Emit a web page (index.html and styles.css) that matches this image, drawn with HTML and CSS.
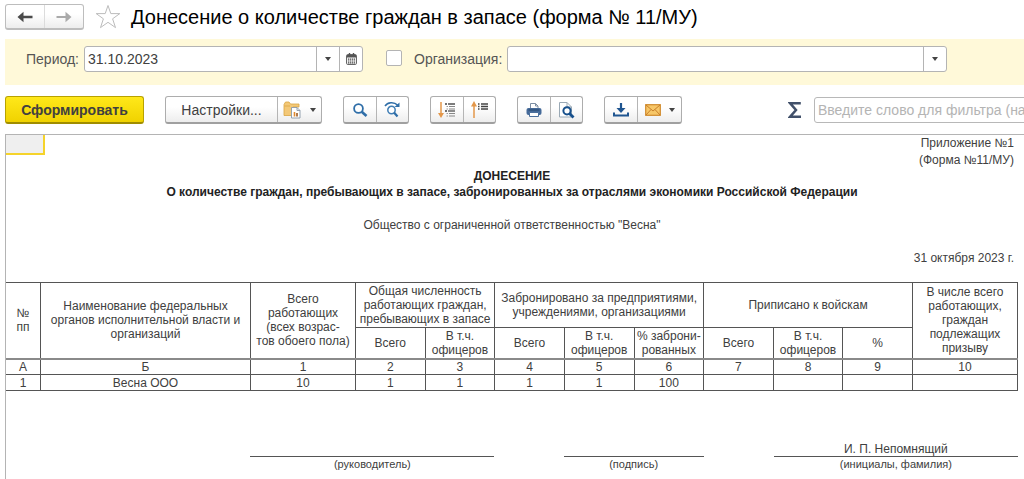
FILE: index.html
```html
<!DOCTYPE html>
<html lang="ru">
<head>
<meta charset="utf-8">
<title>Донесение о количестве граждан в запасе (форма № 11/МУ)</title>
<link rel="stylesheet" href="styles.css">
</head>
<body>
<header class="titlebar">
  <div class="group nav">
    <button class="btn" type="button" aria-label="Назад"><svg width="16" height="12" viewBox="0 0 16 12"><path d="M.5 6 6.500 .8V4.800H15.500V7.200H6.500V11.200Z" fill="#4a4a4a"/></svg></button>
    <button class="btn" type="button" aria-label="Вперед"><svg width="16" height="12" viewBox="0 0 16 12"><path d="M15.500 6 9.500 .8V5H.5V7H9.500V11.200Z" fill="#aaa"/></svg></button>
  </div>
  <button class="star" type="button" aria-label="Избранное"><svg width="26" height="26" viewBox="0 0 26 26"><path d="M13 1.500 15.800 9.600H24.800L17.600 14.800 20.500 23.600 13 18.300 5.500 23.600 8.400 14.800 1.200 9.600H10.200Z" fill="#fff" stroke="#bcbcbc"/></svg></button>
  <h1 class="title">Донесение о количестве граждан в запасе (форма № 11/МУ)</h1>
</header>

<form class="filters">
  <label class="label" for="period">Период:</label>
  <div class="field period">
    <input class="text" id="period" type="text" value="31.10.2023">
    <button class="drop" type="button" aria-label="Выбрать период"><svg width="6" height="4" viewBox="0 0 6 4"><path d="M0 0H6L3 4Z" fill="#444"/></svg></button>
    <button class="drop" type="button" aria-label="Календарь"><svg width="11" height="12" viewBox="0 0 11 12"><rect x=".6" y="1.600" width="9.800" height="9.800" rx="1" fill="#fff" stroke="#555"/><path d="M1 2H10V4.500H1Z" fill="#555"/><path d="M3.500 0V2.500M7.500 0V2.500" stroke="#555" stroke-width="1.400"/><path d="M2 6.200H9M2 8H9M2 9.800H9" stroke="#444" stroke-width="1.200" stroke-dasharray="1.400 .6"/></svg></button>
  </div>
  <input class="check" id="use-org" type="checkbox" aria-label="Отбор по организации">
  <label class="label" for="org">Организация:</label>
  <div class="field org">
    <input class="text" id="org" type="text">
    <button class="drop" type="button" aria-label="Выбрать организацию"><svg width="6" height="4" viewBox="0 0 6 4"><path d="M0 0H6L3 4Z" fill="#444"/></svg></button>
  </div>
</form>

<div class="toolbar">
  <button class="generate" type="button">Сформировать</button>
  <div class="group">
    <button class="btn settings" type="button">Настройки...</button>
    <button class="btn wide" type="button" aria-label="Варианты отчета">
      <svg width="19" height="18" viewBox="0 0 19 18"><path d="M1 3.500 2.500 1H6L7.500 3H16V6H10V14.500H1Z" fill="#f3c877" stroke="#d9a441" stroke-width=".8"/><path d="M1.500 5H7" stroke="#d9a441" stroke-width=".8"/><path d="M8.500 6.500H14L17 9.500V17H8.500Z" fill="#fff" stroke="#8a99a8" stroke-width=".9"/><path d="M14 6.500V9.500H17" fill="none" stroke="#8a99a8" stroke-width=".9"/><path d="M11.500 11V15.500" stroke="#e28a2d" stroke-width="1.600"/><path d="M14 12V15.500" stroke="#9b5a22" stroke-width="1.600"/></svg>
      <svg class="caret" width="6" height="4" viewBox="0 0 6 4"><path d="M0 0H6L3 4Z" fill="#444"/></svg>
    </button>
  </div>
  <div class="group">
    <button class="btn icon" type="button" aria-label="Найти"><svg width="16" height="16" viewBox="0 0 16 16"><circle cx="6.500" cy="6.500" r="4.400" fill="#fff" stroke="#2f6ea8" stroke-width="1.800"/><path d="M9.700 9.700 14.500 14" stroke="#2f6ea8" stroke-width="2.600"/></svg></button>
    <button class="btn icon" type="button" aria-label="Найти далее"><svg width="17" height="17" viewBox="0 0 17 17"><path d="M1 5C3.500 1 10 .5 13.500 4" fill="none" stroke="#2f6ea8" stroke-width="1.500"/><path d="M15.500 1.500V6H10.500Z" fill="#2f6ea8"/><circle cx="7.500" cy="9" r="3.700" fill="#fff" stroke="#3f7db4" stroke-width="1.500"/><path d="M10 11.500 13.500 15.500" stroke="#2f6ea8" stroke-width="2.200"/></svg></button>
  </div>
  <div class="group">
    <button class="btn icon" type="button" aria-label="Развернуть группы"><svg width="18" height="18" viewBox="0 0 18 18"><path d="M3 1V13" stroke="#e3974a" stroke-width="1.500"/><path d="M0 12H6L3 17Z" fill="#e3974a"/><path d="M7 3H9M7 10H9" stroke="#444" stroke-width="1.400"/><path d="M10 3H17" stroke="#444" stroke-width="1.400"/><path d="M11 5.500H17M11 8H17M11 12.500H17M11 15H17" stroke="#888" stroke-width="1"/><path d="M10 10H17" stroke="#444" stroke-width="1.200"/><path d="M8.500 5.500H10M8.500 8H10M8.500 12.500H10M8.500 15H10" stroke="#999"/></svg></button>
    <button class="btn icon" type="button" aria-label="Свернуть группы"><svg width="18" height="18" viewBox="0 0 18 18"><path d="M3 4V17" stroke="#e3974a" stroke-width="1.500"/><path d="M0 5.500 3 0 6 5.500Z" fill="#e3974a"/><path d="M7 3H8.500M10 3H17M7 5.500H8.500M10 5.500H17M7 8H8.500M10 8H17" stroke="#444" stroke-width="1.400"/></svg></button>
  </div>
  <div class="group">
    <button class="btn icon" type="button" aria-label="Печать"><svg width="16" height="16" viewBox="0 0 16 16"><path d="M4.500 7V1.500H9.500L12 4V7" fill="#fff" stroke="#7d8ea3"/><path d="M9.500 1.500V4H12" fill="none" stroke="#7d8ea3"/><rect x=".5" y="6" width="15" height="7" rx="2" fill="#456a99"/><path d="M2.500 8H13.500" stroke="#27466f"/><path d="M3.500 10.500H12.500V14.500H3.500Z" fill="#fff" stroke="#4b6f9c"/></svg></button>
    <button class="btn icon" type="button" aria-label="Просмотр"><svg width="17" height="18" viewBox="0 0 17 18"><path d="M1.500 1.500H9L13.500 6V16H1.500Z" fill="#fff" stroke="#9aa9b5"/><path d="M9 1.500V6H13.500" fill="none" stroke="#9aa9b5"/><circle cx="9" cy="9.800" r="3.600" fill="#fff" stroke="#17508c" stroke-width="2"/><path d="M11.500 12.500 15.500 16.500" stroke="#17508c" stroke-width="2.800"/></svg></button>
  </div>
  <div class="group">
    <button class="btn icon" type="button" aria-label="Сохранить"><svg width="16" height="16" viewBox="0 0 16 16"><path d="M8 1V8" stroke="#1f5590" stroke-width="2.200"/><path d="M3.500 6H12.500L8 11Z" fill="#1f5590"/><path d="M1 10.500V13.500H15V10.500" fill="none" stroke="#1f5590" stroke-width="2"/></svg></button>
    <button class="btn wide" type="button" aria-label="Отправить">
      <svg width="16" height="12" viewBox="0 0 16 12"><rect x=".7" y=".7" width="14.600" height="10.600" fill="#f7c768" stroke="#d08a2c" stroke-width="1.200"/><path d="M1 1 8 7 15 1M1 11 6 5.500M15 11 10 5.500" fill="none" stroke="#c9802b" stroke-width="1"/></svg>
      <svg class="caret" width="6" height="4" viewBox="0 0 6 4"><path d="M0 0H6L3 4Z" fill="#444"/></svg>
    </button>
  </div>
  <button class="sum" type="button" aria-label="Сумма"><svg width="14" height="16" viewBox="0 0 14 16"><path d="M12.800 1.300H2.200L8 8 2.200 14.700H13" fill="none" stroke="#41506a" stroke-width="2.500"/></svg></button>
  <input class="search" type="text" aria-label="Фильтр" placeholder="Введите слово для фильтра (название товара, покупателя и пр.)">
</div>

<main class="sheet">
  <div class="cursor"></div>
  <section class="report">
    <p class="line right">Приложение №1</p>
    <p class="line right form-no">(Форма №11/МУ)</p>
    <h2 class="line heading">ДОНЕСЕНИЕ</h2>
    <h3 class="line heading">О количестве граждан, пребывающих в запасе, забронированных за отраслями экономики Российской Федерации</h3>
    <p class="line company">Общество с ограниченной ответственностью "Весна"</p>
    <p class="line right date">31 октября 2023 г.</p>

    <table class="table">
      <colgroup><col class="c-num"><col class="c-name"><col class="c-total"><col span="8"><col class="c-total"></colgroup>
      <thead>
        <tr class="top">
          <th rowspan="2">№<br>пп</th>
          <th rowspan="2">Наименование федеральных<br>органов исполнительной власти и<br>организаций</th>
          <th rowspan="2">Всего<br>работающих<br>(всех возрас-<br>тов обоего пола)</th>
          <th colspan="2">Общая численность<br>работающих граждан,<br>пребывающих в запасе</th>
          <th colspan="3">Забронировано за предприятиями,<br>учреждениями, организациями</th>
          <th colspan="3">Приписано к войскам</th>
          <th rowspan="2">В числе всего<br>работающих,<br>граждан<br>подлежащих<br>призыву</th>
        </tr>
        <tr class="sub">
          <th>Всего</th><th>В т.ч.<br>офицеров</th><th>Всего</th><th>В т.ч.<br>офицеров</th><th>% заброни-<br>рованных</th><th>Всего</th><th>В т.ч.<br>офицеров</th><th>%</th>
        </tr>
      </thead>
      <tbody>
        <tr><td>А</td><td>Б</td><td>1</td><td>2</td><td>3</td><td>4</td><td>5</td><td>6</td><td>7</td><td>8</td><td>9</td><td>10</td></tr>
        <tr><td>1</td><td>Весна ООО</td><td>10</td><td>1</td><td>1</td><td>1</td><td>1</td><td>100</td><td></td><td></td><td></td><td></td></tr>
      </tbody>
    </table>

    <div class="signs">
      <div class="sign head"><span class="name"></span><span class="caption">(руководитель)</span></div>
      <div class="sign hand"><span class="name"></span><span class="caption">(подпись)</span></div>
      <div class="sign full"><span class="name">И. П. Непомнящий</span><span class="caption">(инициалы, фамилия)</span></div>
    </div>
  </section>
</main>
</body>
</html>
```
FILE: styles.css
```css
* { box-sizing: border-box; }
body {
  margin: 0;
  padding: 4px 0 0 5px;
  height: 100vh;
  display: flex;
  flex-direction: column;
  overflow: hidden;
  background: #fff;
  color: #404040;
  font-family: "Liberation Sans", Arial, sans-serif;
  font-size: 14px;
}
button, input { font: inherit; color: inherit; }
button { padding: 0; border: 0; background: none; }
svg { display: block; flex: none; }

.titlebar { display: flex; align-items: center; height: 26px; flex: none; }
.group {
  display: flex;
  flex: none;
  height: 28px;
  border: 1px solid #adadad;
  border-bottom: 2px solid #a0a0a0;
  border-radius: 3px;
  background: linear-gradient(#fff 40%, #ededed);
}
.nav { height: 26px; width: 79px; border-color: #bdbdbd; }
.btn { display: flex; align-items: center; justify-content: center; flex: 1; }
.btn + .btn { border-left: 1px solid #b5b5b5; }
.nav .btn + .btn { border-color: #dcdcdc; }
.star { margin-left: 11px; }
.title { margin: 0 0 0 10px; color: #000; font-size: 20px; font-weight: 400; line-height: 26px; white-space: nowrap; }

.filters {
  display: flex;
  align-items: flex-start;
  flex: none;
  margin-top: 9px;
  padding: 7px 77px 13px 21px;
  background: #fff9d9;
}
.label { line-height: 26px; color: #555; white-space: nowrap; }
.field { display: flex; height: 26px; border: 1px solid #b4b4b4; border-radius: 3px; background: #fff; overflow: hidden; }
.period { width: 279px; margin-left: 5px; flex: none; }
.org { flex: 1; margin-left: 5px; }
.text { flex: 1; min-width: 0; border: 0; padding: 0 3px; background: none; outline: 0; }
.drop { width: 23px; border-left: 1px solid #b4b4b4; display: flex; align-items: center; justify-content: center; }
.check { appearance: none; width: 16px; height: 16px; margin: 4px 12px 0 23px; border: 1px solid #b4b4b4; border-radius: 2px; background: #fff; flex: none; }

.toolbar { display: flex; align-items: center; flex: none; gap: 21px; height: 28px; margin-top: 11px; }
.generate {
  width: 139px;
  height: 28px;
  flex: none;
  border: 1px solid #b8a200;
  border-bottom: 2px solid #a08d00;
  border-radius: 3px;
  background: linear-gradient(#ffe81a, #f0d200);
  font-weight: 700;
}
.settings { width: 111px; flex: none; }
.icon { width: 32px; flex: none; }
.wide { width: 44px; flex: none; }
.caret { margin-left: 8px; }
.sum { margin-left: 85px; flex: none; }
.search { width: 260px; height: 26px; margin-left: -9px; flex: none; padding: 0 3px; border: 1px solid #b8b8b8; border-radius: 3px; }
.search::placeholder { color: #b4b4b4; opacity: 1; }

.sheet {
  display: grid;
  flex: 1;
  margin-top: 10px;
  border-top: 1px solid #b4b4b4;
  border-left: 1px solid #b4b4b4;
  overflow: hidden;
  font-size: 12px;
}
.cursor, .report { grid-area: 1 / 1; }
.cursor { width: 39px; height: 20px; border: solid #f5d32b; border-width: 0 2px 2px 0; background: #efefef; }
.report { margin-right: 6px; min-width: 0; }
.line { margin: 0; height: 16px; line-height: 16px; font-size: 12px; text-align: center; color: #404040; }
.right { padding-right: 4px; text-align: right; }
.form-no { margin-top: 1px; }
.heading { color: #222; }
.company { margin-top: 17px; }
.date { margin-top: 17px; }

.table { width: calc(100% + 1px); margin: 16px 0 0 -1px; table-layout: fixed; border-collapse: collapse; line-height: 14px; }
.c-num { width: 35px; }
.c-name { width: 210px; }
.c-total { width: 105px; }
.table th, .table td { padding: 0; border: 1px solid #555; font-weight: 400; text-align: center; white-space: nowrap; }
.top { height: 45px; }
.sub { height: 31px; }
.table td { height: 16px; }
.table thead { border-bottom: 2px solid #8a8a8a; }

.signs { display: grid; grid-template-columns: 244fr 244fr 69fr 140fr 70fr 244fr; margin-top: 50px; }
.sign { display: flex; flex-direction: column; text-align: center; }
.head { grid-column: 2; }
.hand { grid-column: 4; }
.full { grid-column: 6; }
.name { height: 16px; line-height: 16px; border-bottom: 1px solid #555; }
.caption { line-height: 15px; font-size: 11px; }
```
